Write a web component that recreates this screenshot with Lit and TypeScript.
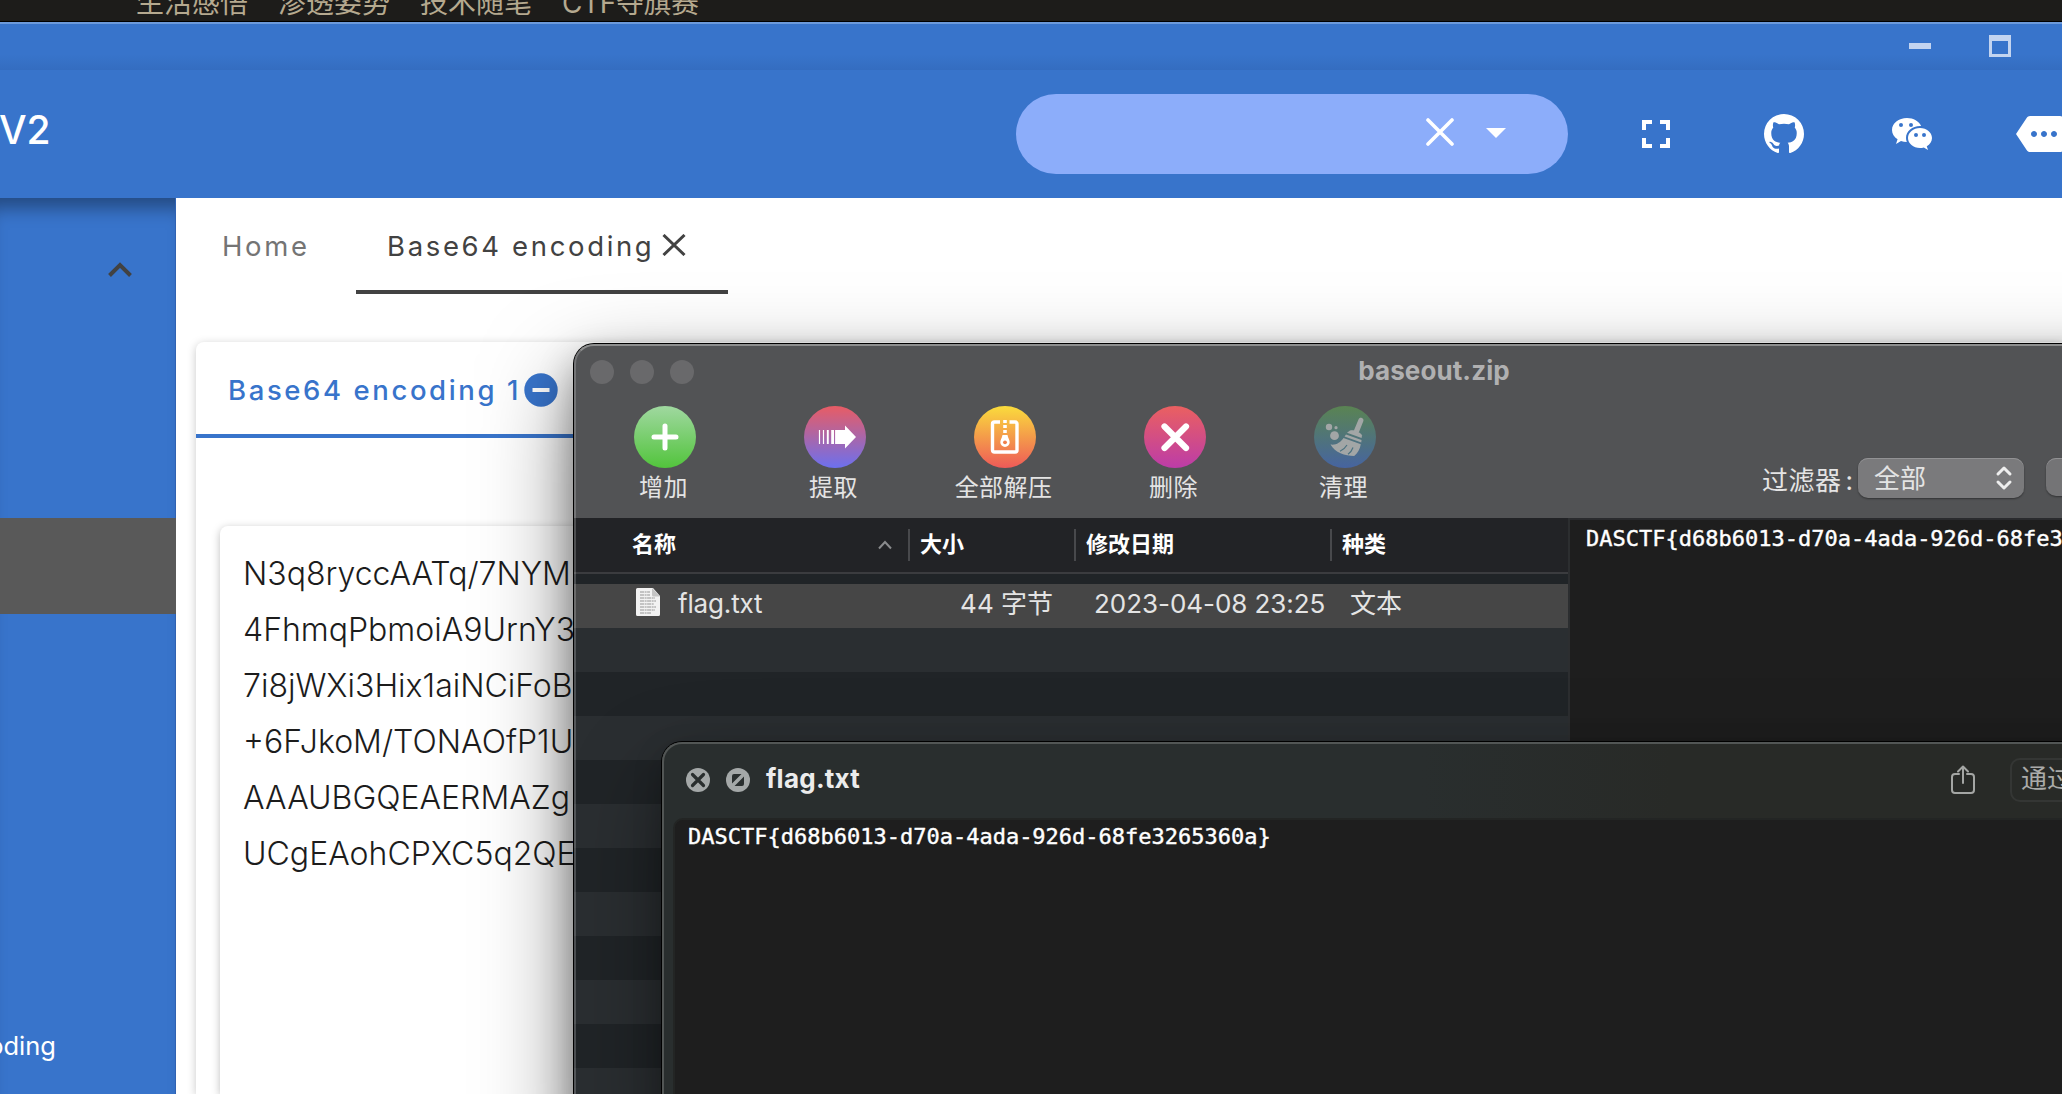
import { LitElement, html, css, svg } from "lit";
import { customElement } from "lit/decorators.js";

const GITHUB =
  "M12,2A10,10 0 0,0 2,12C2,16.42 4.87,20.17 8.84,21.5C9.34,21.58 9.5,21.27 9.5,21C9.5,20.77 9.5,20.14 9.5,19.31C6.73,19.91 6.14,17.97 6.14,17.97C5.68,16.81 5.03,16.5 5.03,16.5C4.12,15.88 5.1,15.9 5.1,15.9C6.1,15.97 6.63,16.93 6.63,16.93C7.5,18.45 8.97,18 9.54,17.76C9.63,17.11 9.89,16.67 10.17,16.42C7.95,16.17 5.62,15.31 5.62,11.5C5.62,10.39 6,9.5 6.65,8.79C6.55,8.54 6.2,7.5 6.75,6.15C6.75,6.15 7.59,5.88 9.5,7.17C10.29,6.95 11.15,6.84 12,6.84C12.85,6.84 13.71,6.95 14.5,7.17C16.41,5.88 17.25,6.15 17.25,6.15C17.8,7.5 17.45,8.54 17.35,8.79C18,9.5 18.38,10.39 18.38,11.5C18.38,15.32 16.04,16.16 13.81,16.41C14.17,16.72 14.5,17.33 14.5,18.26C14.5,19.6 14.5,20.68 14.5,21C14.5,21.27 14.66,21.59 15.17,21.5C19.14,20.16 22,16.42 22,12A10,10 0 0,0 12,2Z";
const WECHAT =
  "M9.5,4C5.36,4 2,6.69 2,10C2,11.89 3.08,13.56 4.78,14.66L4,17L6.5,15.5C7.39,15.81 8.37,16 9.41,16C9.15,15.37 9,14.7 9,14C9,10.69 12.13,8 16,8C16.19,8 16.38,8 16.56,8.03C15.54,5.69 12.78,4 9.5,4M6.5,6.5A1,1 0 0,1 7.5,7.5A1,1 0 0,1 6.5,8.5A1,1 0 0,1 5.5,7.5A1,1 0 0,1 6.5,6.5M11.5,6.5A1,1 0 0,1 12.5,7.5A1,1 0 0,1 11.5,8.5A1,1 0 0,1 10.5,7.5A1,1 0 0,1 11.5,6.5M16,9C12.69,9 10,11.24 10,14C10,16.76 12.69,19 16,19C16.67,19 17.31,18.92 17.91,18.75L20,20L19.38,18.13C20.95,17.22 22,15.71 22,14C22,11.24 19.31,9 16,9M14,11.5A1,1 0 0,1 15,12.5A1,1 0 0,1 14,13.5A1,1 0 0,1 13,12.5A1,1 0 0,1 14,11.5M18,11.5A1,1 0 0,1 19,12.5A1,1 0 0,1 18,13.5A1,1 0 0,1 17,12.5A1,1 0 0,1 18,11.5Z";
const FULLSCREEN =
  "M5,5H10V7H7V10H5V5M14,5H19V10H17V7H14V5M17,14H19V19H14V17H17V14M10,17V19H5V14H7V17H10Z";
const MORE =
  "M22 3H7c-.69 0-1.23.35-1.59.88L0 12l5.41 8.11c.36.53.9.89 1.59.89h15c1.1 0 2-.9 2-2V5c0-1.1-.9-2-2-2zM9 13.5c-.83 0-1.5-.67-1.5-1.5s.67-1.5 1.5-1.5 1.5.67 1.5 1.5-.67 1.5-1.5 1.5zm5 0c-.83 0-1.5-.67-1.5-1.5s.67-1.5 1.5-1.5 1.5.67 1.5 1.5-.67 1.5-1.5 1.5zm5 0c-.83 0-1.5-.67-1.5-1.5s.67-1.5 1.5-1.5 1.5.67 1.5 1.5-.67 1.5-1.5 1.5z";

const FLAG = "DASCTF{d68b6013-d70a-4ada-926d-68fe3265360a}";

const ENCODED = [
  "N3q8ryccAATq/7NYM",
  "4FhmqPbmoiA9UrnY3",
  "7i8jWXi3Hix1aiNCiFoB",
  "+6FJkoM/TONAOfP1U",
  "AAAUBGQEAERMAZg",
  "UCgEAohCPXC5q2QE",
];

const TOOLS = [
  {
    label: "增加",
    from: "#a0d8a0",
    to: "#52c43c",
    art: svg`<path d="M31 20V42M20 31H42" stroke="#fff" stroke-width="5" stroke-linecap="round"/>`,
  },
  {
    label: "提取",
    from: "#e85c64",
    to: "#6c70ee",
    art: svg`<path d="M33 24h8v-4.500l11 11.500-11 11.500v-4.500h-8z" fill="#fff"/>
      <path d="M15.500 24v14M19.500 24v14" stroke="#fff" stroke-width="1.200"/>
      <path d="M23.800 24v14" stroke="#fff" stroke-width="1.900"/><path d="M28.600 24v14" stroke="#fff" stroke-width="2.800"/><path d="M32.200 24v14" stroke="#fff" stroke-width="2.200"/>`,
  },
  {
    label: "全部解压",
    from: "#fadc3c",
    to: "#ee5a58",
    art: svg`<path d="M26 16H20.500a2 2 0 0 0-2 2V44a2 2 0 0 0 2 2H41a2 2 0 0 0 2-2V18a2 2 0 0 0-2-2H35.500" fill="none" stroke="#fff" stroke-width="3.400"/>
      <path d="M31 14v15" stroke="#fff" stroke-width="3.600" stroke-dasharray="3 2"/>
      <path d="M28.500 29h5c.4 3 2.200 4.500 2.200 7.300a4.700 4.700 0 0 1-9.400 0c0-2.800 1.800-4.300 2.200-7.300z" fill="#fff"/><circle cx="31" cy="36.300" r="1.900" fill="#f0804c"/>`,
  },
  {
    label: "删除",
    from: "#ea6060",
    to: "#bc3ca8",
    art: svg`<path d="M20.500 20.500L42 42M42 20.500L20.500 42" stroke="#fff" stroke-width="6.200" stroke-linecap="round"/>`,
  },
  {
    label: "清理",
    from: "#5a8452",
    to: "#4664a0",
    art: svg`<g fill="#a2a6a6"><circle cx="15" cy="21" r="3.200"/><circle cx="22" cy="21.700" r="1.600"/><circle cx="20.500" cy="29.700" r="4.400"/>
      <path d="M44.500 13.500c.6-1.800 2.200-2 3.400-1.500s2 1.700 1.400 3.200L44.800 26.600l-5-1.800z"/>
      <path d="M36 24.500c4-1 10 1.300 12 5l-.4 2.500-14.600-5.200z"/><path d="M32 28.500l15.500 5.600-.2 2.400-16.800-6z"/>
      <path d="M29.500 32l17.300 6.300c-.8 5-3.300 9-6.600 11.700C31 50 21 46.500 16.500 38.500c5.500.8 9.800-1.800 13-6.500z"/></g>
      <path d="M33 39c-1.500 2.500-4 5-7 6.300M39 41.500c-.8 2.500-2.700 5-5 6.700" stroke="#4c7280" stroke-width="1.200" fill="none"/>`,
  },
];

const glyph = (d: string) => html`<svg class="glyph" viewBox="0 0 24 24"><path d=${d} fill="#fff"></path></svg>`;

@customElement("window-archive")
class WindowArchive extends LitElement {
  static styles = css`
    :host {
      display: flex;
      flex-direction: column;
      font-family: Inter, "Noto Sans CJK SC", sans-serif;
      color: #e4e4e4;
      background: #202427;
    }
    .titlebar {
      display: grid;
      grid-template-columns: 1fr auto 1fr;
      align-items: center;
      height: 56px;
      background: #525355;
    }
    .lights {
      display: flex;
      gap: 16px;
      padding-left: 16px;
    }
    .light {
      width: 24px;
      height: 24px;
      border-radius: 50%;
      background: #69696b;
    }
    .title {
      font-weight: 700;
      font-size: 26px;
      line-height: 32px;
      letter-spacing: 0.1px;
      color: #b0b0b1;
      margin-top: -3px;
    }
    .toolbar {
      display: flex;
      height: 118px;
      padding-left: 5px;
      background: #525355;
    }
    .tool {
      width: 170px;
      padding-top: 6px;
      display: flex;
      flex-direction: column;
      align-items: center;
    }
    .badge {
      width: 62px;
      height: 62px;
      margin-left: 2px;
    }
    .label {
      font-size: 24px;
      line-height: 30px;
      margin: 5px 0 0 -1px;
      letter-spacing: 0.4px;
    }
    .filter {
      display: flex;
      align-items: flex-start;
      margin-left: 333px;
      padding-top: 58px;
    }
    .filter-label {
      font-size: 26px;
      line-height: 40px;
      width: 96px;
      padding-top: 3px;
      white-space: nowrap;
      letter-spacing: 0.5px;
    }
    .colon {
      margin-left: 4px;
    }
    .select {
      box-sizing: border-box;
      width: 166px;
      height: 40px;
      border-radius: 10px;
      background: #7a7a7c;
      box-shadow: 0 1px 2px rgba(0, 0, 0, 0.4), inset 0 1px 0 #929294;
      display: flex;
      align-items: center;
      justify-content: space-between;
      padding: 0 11px 4px 16px;
      font-size: 26px;
    }
    .select svg {
      width: 18px;
      height: 26px;
      margin-top: 4px;
    }
    .second {
      width: 170px;
      height: 38px;
      margin-left: 22px;
      border-radius: 10px;
      background: #747476;
      box-shadow: 0 1px 2px rgba(0, 0, 0, 0.4), inset 0 1px 0 #929294;
    }
    .body {
      display: flex;
      flex: 1;
      min-height: 0;
    }
    .table {
      width: 994px;
      border-right: 2px solid #2c2e30;
    }
    .cols {
      display: grid;
      grid-template-columns: 334px 166px 256px 238px;
    }
    .head {
      height: 54px;
      border-bottom: 2px solid #3b3c3f;
      margin-bottom: 10px;
      background: #222326;
      align-items: center;
      font-size: 22px;
      font-weight: 600;
      color: #fff;
    }
    .th {
      display: flex;
      align-items: center;
      height: 32px;
      border-left: 2px solid #48494c;
      padding-left: 10px;
      line-height: 30px;
    }
    .th span {
      margin-top: -2px;
    }
    .th.first {
      border-left: 0;
      padding: 0 16px 0 58px;
      justify-content: space-between;
    }
    .th svg {
      width: 14px;
      height: 10px;
    }
    .row {
      box-sizing: border-box;
      height: 44px;
      padding-bottom: 4px;
      background: #464646;
      align-items: center;
      font-size: 26px;
      line-height: 36px;
      white-space: nowrap;
    }
    .name {
      display: flex;
      align-items: center;
      padding-left: 62px;
      gap: 18px;
      letter-spacing: -0.15px;
    }
    .name svg {
      width: 24px;
      height: 28px;
      margin-top: -5px;
    }
    .size {
      text-align: right;
      padding-right: 21px;
    }
    .date {
      padding-left: 20px;
      letter-spacing: -0.05px;
    }
    .kind {
      padding-left: 20px;
    }
    .stripe {
      height: 44px;
      background: #202427;
    }
    .stripe.alt {
      background: #2a2e31;
    }
    .preview {
      flex: 1;
      border-top: 2px solid #2a2b2e;
      background: #1e1e1e;
      padding: 6px 0 0 16px;
      font-family: "DejaVu Sans Mono", monospace;
      font-size: 22px;
      line-height: 26px;
      color: #fff;
      -webkit-text-stroke: 0.4px #fff;
      white-space: nowrap;
    }
  `;

  render() {
    return html`
      <div class="titlebar">
        <div class="lights"><span class="light"></span><span class="light"></span><span class="light"></span></div>
        <div class="title">baseout.zip</div>
        <div></div>
      </div>
      <div class="toolbar">
        ${TOOLS.map(
          (t, i) => html`<div class="tool">
            <svg class="badge" viewBox="0 0 62 62">
              <defs>
                <linearGradient id="g${i}" x1="0" y1="0" x2="0" y2="1">
                  <stop offset="0" stop-color=${t.from}></stop>
                  <stop offset="1" stop-color=${t.to}></stop>
                </linearGradient>
              </defs>
              <circle cx="31" cy="31" r="31" fill="url(#g${i})"></circle>
              ${t.art}
            </svg>
            <div class="label">${t.label}</div>
          </div>`
        )}
        <div class="filter">
          <div class="filter-label">过滤器<span class="colon">:</span></div>
          <div class="select">
            <span>全部</span>
            <svg viewBox="0 0 18 26">
              <path d="M3 9L9 3L15 9M3 17L9 23L15 17" fill="none" stroke="#eee" stroke-width="3" stroke-linecap="round" stroke-linejoin="round"></path>
            </svg>
          </div>
          <div class="second"></div>
        </div>
      </div>
      <div class="body">
        <div class="table">
          <div class="cols head">
            <div class="th first">
              <span>名称</span>
              <svg viewBox="0 0 14 10"><path d="M1 8.500L7 2L13 8.500" fill="none" stroke="#8a8b8d" stroke-width="2"></path></svg>
            </div>
            <div class="th"><span>大小</span></div>
            <div class="th"><span>修改日期</span></div>
            <div class="th"><span>种类</span></div>
          </div>
          <div class="cols row">
            <div class="name">
              <svg viewBox="0 0 24 28">
                <path d="M1.500 0H17L24 8V26.500a1.500 1.500 0 0 1-1.500 1.500H1.500A1.500 1.500 0 0 1 0 26.500V1.500A1.500 1.500 0 0 1 1.500 0z" fill="#f2f2f2"></path>
                <path d="M16 0L24 8.500H17.500A1.500 1.500 0 0 1 16 7z" fill="#c4c4c4"></path>
                <path d="M4 4H14M4 7H14M4 10H19M4 13H20M4 16H18M4 19H20M4 22H19M4 25H15" stroke="#b4b4b4" stroke-width="1.300" stroke-dasharray="4 .6 2 .5"></path>
              </svg>
              <span>flag.txt</span>
            </div>
            <div class="size">44 字节</div>
            <div class="date">2023-04-08 23:25</div>
            <div class="kind">文本</div>
          </div>
          ${Array.from({ length: 11 }, (_, i) => html`<div class="stripe ${i % 2 ? "" : "alt"}"></div>`)}
        </div>
        <div class="preview">${FLAG}</div>
      </div>
    `;
  }
}

@customElement("window-quicklook")
class WindowQuicklook extends LitElement {
  static styles = css`
    :host {
      display: flex;
      flex-direction: column;
      font-family: Inter, "Noto Sans CJK SC", sans-serif;
      background: linear-gradient(90deg, #292e2e 0, #292e2e 760px, #282a27 1010px);
    }
    .bar {
      display: flex;
      align-items: center;
      height: 76px;
      padding-left: 24px;
    }
    .dot {
      width: 24px;
      height: 24px;
      flex: none;
      margin-right: 16px;
    }
    .title {
      font-weight: 700;
      font-size: 26px;
      line-height: 32px;
      letter-spacing: 0.25px;
      color: #ececec;
      margin-top: -2px;
      flex: 0 0 1184px;
    }
    .share {
      width: 26px;
      height: 32px;
      flex: none;
      margin-right: 34px;
    }
    .open {
      box-sizing: border-box;
      width: 260px;
      flex: none;
      height: 44px;
      border: 2px solid #343634;
      border-radius: 10px;
      padding-left: 9px;
      font-size: 26px;
      line-height: 37px;
      color: #aaaba9;
    }
    .content {
      flex: 1;
      margin-left: 11px;
      border: 2px solid #232524;
      border-radius: 10px 0 0 0;
      background: #1e1e1e;
      padding: 4px 0 0 13px;
      font-family: "DejaVu Sans Mono", monospace;
      font-size: 22px;
      line-height: 26px;
      color: #fff;
      -webkit-text-stroke: 0.4px #fff;
    }
  `;

  render() {
    return html`
      <div class="bar">
        <svg class="dot" viewBox="0 0 24 24">
          <circle cx="12" cy="12" r="12" fill="#a4a8a8"></circle>
          <path d="M6.500 6.500L17.500 17.500M17.500 6.500L6.500 17.500" stroke="#292e2e" stroke-width="3.200" stroke-linecap="round"></path>
        </svg>
        <svg class="dot" viewBox="0 0 24 24">
          <circle cx="12" cy="12" r="12" fill="#a4a8a8"></circle>
          <path d="M6 15.500V8a2 2 0 0 1 2-2h7.500zM8.500 18H16a2 2 0 0 0 2-2V8.500z" fill="#292e2e"></path>
        </svg>
        <div class="title">flag.txt</div>
        <svg class="share" viewBox="0 0 26 32">
          <path d="M9 10H5a3 3 0 0 0-3 3V26a3 3 0 0 0 3 3H21a3 3 0 0 0 3-3V13a3 3 0 0 0-3-3H17M13 19V3M8 7.500L13 2.500L18 7.500" fill="none" stroke="#a4a6a4" stroke-width="2" stroke-linecap="round" stroke-linejoin="round"></path>
        </svg>
        <div class="open">通过</div>
      </div>
      <div class="content">${FLAG}</div>
    `;
  }
}

@customElement("app-root")
class AppRoot extends LitElement {
  static styles = css`
    :host {
      display: flex;
      flex-direction: column;
      position: relative;
      width: 2062px;
      height: 1094px;
      overflow: hidden;
      background: #fff;
      font-family: Inter, "Noto Sans CJK SC", sans-serif;
    }
    .behind {
      display: flex;
      align-items: flex-end;
      gap: 30px;
      height: 21px;
      flex: none;
      overflow: hidden;
      padding-left: 136px;
      background: #1d1c1a;
      border-bottom: 1px solid #000;
      font-size: 28px;
      line-height: 28px;
      color: #b5a98f;
    }
    .behind span {
      height: 28px;
      margin-bottom: 4px;
    }
    .behind span:last-child {
      letter-spacing: -0.4px;
    }
    .chrome {
      box-sizing: border-box;
      height: 48px;
      flex: none;
      border-top: 2px solid #6c9adb;
      background: linear-gradient(#3874cb 0, #3874cb 66%, #346dc0 100%);
      display: flex;
      justify-content: flex-end;
      align-items: center;
      gap: 58px;
      padding: 0 51px 2px 0;
    }
    .min {
      width: 22px;
      height: 6px;
      background: #c3d4f0;
    }
    .max {
      box-sizing: border-box;
      width: 22px;
      height: 22px;
      border: 3px solid #c3d4f0;
      border-top-width: 6px;
    }
    .appbar {
      display: flex;
      align-items: center;
      height: 128px;
      flex: none;
      background: #3874cb;
    }
    .version {
      width: 1016px;
      flex: none;
      font-size: 39px;
      font-weight: 500;
      line-height: 48px;
      color: #fff;
      margin-top: -8px;
      letter-spacing: -0.2px;
      text-indent: -1px;
    }
    .search {
      box-sizing: border-box;
      width: 552px;
      flex: none;
      height: 80px;
      border-radius: 40px;
      background: #8cadfa;
      display: flex;
      align-items: center;
      justify-content: flex-end;
      padding-right: 62px;
      gap: 32px;
    }
    .search .x {
      width: 28px;
      height: 28px;
      margin-top: -4px;
    }
    .search .caret {
      width: 20px;
      height: 10px;
      margin-top: -2px;
    }
    .links {
      display: flex;
      flex: none;
      gap: 80px;
      margin-left: 64px;
    }
    .glyph {
      width: 48px;
      height: 48px;
      flex: none;
    }
    .main {
      display: flex;
      flex: 1;
      min-height: 0;
    }
    .side {
      box-sizing: border-box;
      width: 176px;
      background: #3874cb;
      border-right: 1px solid #3062b2;
      display: flex;
      flex-direction: column;
      box-shadow: inset 0 22px 18px -12px rgba(0, 0, 0, 0.36);
    }
    .group {
      box-sizing: border-box;
      height: 320px;
      padding: 64px 43px 0 0;
      display: flex;
      justify-content: flex-end;
      flex: none;
    }
    .group svg {
      width: 24px;
      height: 15px;
    }
    .active {
      height: 96px;
      flex: none;
      background: #595959;
      margin-right: -1px;
    }
    .item {
      margin-top: 415px;
      width: 56px;
      display: flex;
      justify-content: flex-end;
      overflow: hidden;
      font-size: 25.500px;
      line-height: 34px;
      color: #fff;
    }
    .page {
      flex: 1;
      min-width: 0;
      display: flex;
      flex-direction: column;
      background: #fff;
    }
    .tabs {
      display: flex;
      height: 96px;
      flex: none;
      font-size: 27.500px;
      letter-spacing: 2.650px;
      padding-left: 46px;
      color: #747474;
    }
    .tab {
      display: flex;
      align-items: center;
      height: 96px;
      box-sizing: border-box;
    }
    .home {
      width: 134px;
    }
    .current {
      width: 372px;
      padding: 4px 0 0 31px;
      border-bottom: 4px solid #424242;
      color: #424242;
    }
    .current svg {
      width: 24px;
      height: 22px;
      margin-left: 8px;
      margin-top: -2px;
    }
    .card {
      margin: 48px 0 0 20px;
      flex: 1;
      border-radius: 8px 0 0 0;
      background: #fff;
      box-shadow: 0 2px 10px rgba(0, 0, 0, 0.22);
      display: flex;
      flex-direction: column;
    }
    .card-tab {
      box-sizing: border-box;
      display: flex;
      align-items: center;
      height: 96px;
      width: 600px;
      border-bottom: 4px solid #3874cb;
      padding: 4px 0 0 32px;
      font-size: 27.500px;
      font-weight: 500;
      letter-spacing: 2.600px;
      color: #3874cb;
      flex: none;
    }
    .card-tab svg {
      width: 34px;
      height: 34px;
      margin-left: 3px;
    }
    .paper {
      flex: 1;
      margin: 88px 0 0 24px;
      border-radius: 8px 0 0 0;
      background: #fff;
      box-shadow: 0 2px 8px rgba(0, 0, 0, 0.26);
      padding: 20px 0 0 23px;
      font-size: 32px;
      font-weight: 350;
      line-height: 56px;
      color: #1c1c1c;
      white-space: nowrap;
    }
    .win {
      position: absolute;
      overflow: hidden;
      border-radius: 20px 0 0 0;
    }
    .edge {
      position: absolute;
      border-radius: 20px 0 0 0;
      border: 2px solid #7f8080;
      border-right: 0;
      border-bottom: 0;
      pointer-events: none;
    }
    .archive {
      left: 574px;
      top: 344px;
      width: 1720px;
      height: 800px;
    }
    .look {
      left: 662px;
      top: 742px;
      width: 1600px;
      height: 400px;
    }
    .win.archive {
      box-shadow: 0 0 0 1px #000, 0 36px 90px rgba(0, 0, 0, 0.5), 0 16px 36px rgba(0, 0, 0, 0.3);
    }
    .win.look {
      box-shadow: 0 0 0 1px #000, 0 36px 90px rgba(0, 0, 0, 0.4), 0 10px 30px rgba(0, 0, 0, 0.2);
    }
    .edge.archive {
      border-top-color: #8d8e8e;
      border-left-color: rgba(255, 255, 255, 0.2);
    }
    .edge.look {
      border-color: #525655;
    }
  `;

  render() {
    return html`
      <div class="behind"><span>生活感悟</span><span>渗透姿势</span><span>技术随笔</span><span>CTF夺旗赛</span></div>
      <div class="chrome"><span class="min"></span><span class="max"></span></div>
      <div class="appbar">
        <div class="version">V2</div>
        <div class="search">
          <svg class="x" viewBox="0 0 28 28">
            <path d="M2 2L26 26M26 2L2 26" stroke="#fff" stroke-width="3.600" stroke-linecap="round"></path>
          </svg>
          <svg class="caret" viewBox="0 0 20 10"><path d="M0 0H20L10 10z" fill="#fff"></path></svg>
        </div>
        <div class="links">${glyph(FULLSCREEN)}${glyph(GITHUB)}${glyph(WECHAT)}${glyph(MORE)}</div>
      </div>
      <div class="main">
        <div class="side">
          <div class="group">
            <svg viewBox="0 0 24 15"><path d="M1.500 13.500L12 3L22.500 13.500" fill="none" stroke="#424242" stroke-width="4"></path></svg>
          </div>
          <div class="active"></div>
          <div class="item">encoding</div>
        </div>
        <div class="page">
          <div class="tabs">
            <div class="tab home">Home</div>
            <div class="tab current">
              <span>Base64 encoding</span>
              <svg viewBox="0 0 24 22"><path d="M1.500 1L22.500 21M22.500 1L1.500 21" stroke="#424242" stroke-width="3"></path></svg>
            </div>
          </div>
          <div class="card">
            <div class="card-tab">
              <span>Base64 encoding 1</span>
              <svg viewBox="0 0 34 34"><circle cx="17" cy="17" r="16.700" fill="#3874cb"></circle><path d="M8.500 17H25.500" stroke="#fff" stroke-width="4"></path></svg>
            </div>
            <div class="paper">${ENCODED.map((l) => html`<div>${l}</div>`)}</div>
          </div>
        </div>
      </div>
      <window-archive class="win archive"></window-archive>
      <div class="edge archive"></div>
      <window-quicklook class="win look"></window-quicklook>
      <div class="edge look"></div>
    `;
  }
}
